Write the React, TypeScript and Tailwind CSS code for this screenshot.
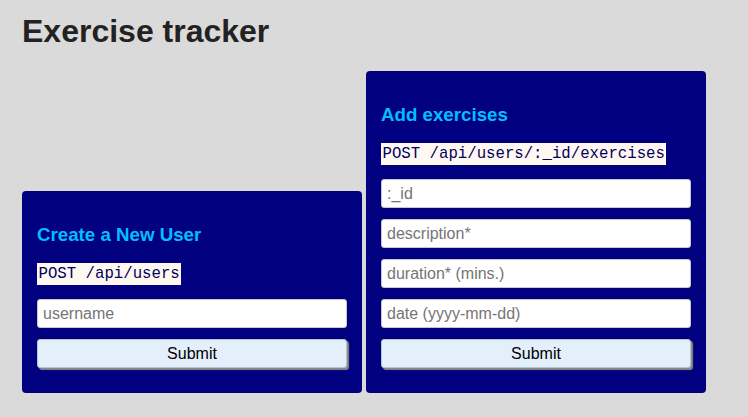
const fieldsExercise = [':_id', 'description*', 'duration* (mins.)', 'date (yyyy-mm-dd)'];

function Card({ title, route, fields }: { title: string; route: string; fields: string[] }) {
  return (
    <form
      onSubmit={(e) => e.preventDefault()}
      className="w-[340px] rounded-[4px] bg-[#000080] px-[15px] pt-[33px] pb-[25px]"
    >
      <h3 className="text-[18.72px] font-bold leading-[22px] text-[#00bfff]">{title}</h3>
      <code className="mt-[17px] mb-[14px] block h-[22px] w-fit bg-[#fff8f0] px-[1.5px] font-['Liberation_Mono','Courier_New',monospace] text-[15.7px] leading-[22px] text-[#000060]">
        {route}
      </code>
      {fields.map((f) => (
        <input
          key={f}
          placeholder={f}
          className="mb-[11px] block h-[29px] w-full rounded-[3px] border border-[#c8c8c8] bg-white px-[5px] text-[16px] text-black outline-none placeholder:text-[#757575]"
        />
      ))}
      <button
        type="submit"
        className="block h-[29px] w-full rounded-[3px] border border-[#b8c4cc] bg-[#e3f0fb] text-[16px] leading-none text-black shadow-[2px_2px_1px_#8a8a8a]"
      >
        Submit
      </button>
    </form>
  );
}

export default function App() {
  return (
    <div className="min-h-[417px] bg-[#dadada] pl-[22px] pt-[13px] font-['Liberation_Sans',Arial,sans-serif]">
      <h1 className="text-[32px] font-bold leading-[37px] text-[#222]">Exercise tracker</h1>
      <div className="mt-[21px] flex items-end gap-[4px]">
        <Card title="Create a New User" route="POST /api/users" fields={['username']} />
        <Card title="Add exercises" route="POST /api/users/:_id/exercises" fields={fieldsExercise} />
      </div>
    </div>
  );
}
